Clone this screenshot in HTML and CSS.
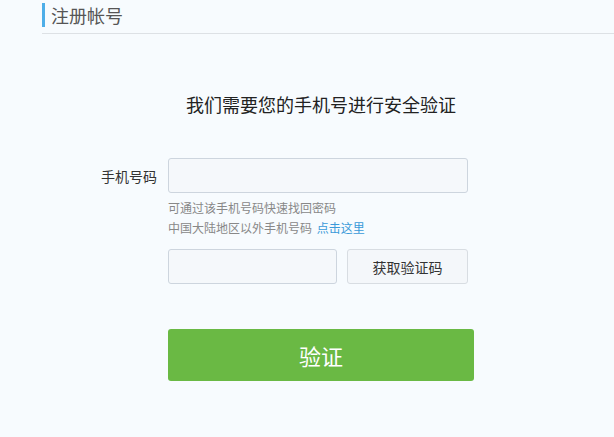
FILE: index.html
```html
<!DOCTYPE html>
<html lang="zh-CN">
<head>
    <meta charset="UTF-8">
    <meta name="viewport" content="width=device-width, initial-scale=1.0">
    <title>注册帐号</title>
    <link rel="stylesheet" href="styles.css">
</head>
<body>
    <div class="header">
        <h3 class="header-title">注册帐号</h3>
    </div>
    <div class="main">
        <h2 class="tip">我们需要您的手机号进行安全验证</h2>
        <div class="row">
            <label class="label" for="phone">手机号码</label>
            <input class="input" type="text" id="phone">
        </div>
        <div class="hint">
            <p>可通过该手机号码快速找回密码</p>
            <p>中国大陆地区以外手机号码 <a href="#">点击这里</a></p>
        </div>
        <div class="row code-row">
            <span class="label"></span>
            <input class="input code" type="text" id="code">
            <button class="get-code">获取验证码</button>
        </div>
        <div class="row submit-row">
            <span class="label"></span>
            <button class="submit">验证</button>
        </div>
    </div>
</body>
</html>
```

FILE: styles.css
```css
body {
    margin: 0;
    background: #f7fbfe;
    font-family: "Noto Sans CJK SC", "Noto Sans", sans-serif;
    color: #333;
}
.header {
    padding: 3px 0 0 42px;
}
.header-title {
    margin: 0;
    padding-left: 6px;
    border-left: 3px solid #4eaee8;
    height: 24px;
    line-height: 24px;
    font-size: 18px;
    font-weight: normal;
    color: #555;
}
.header::after {
    content: "";
    display: block;
    margin-top: 6px;
    border-bottom: 1px solid #dde1e5;
}
.main {
    padding-top: 57px;
}
.tip {
    margin: 0 0 41px 168px;
    width: 306px;
    text-align: center;
    font-size: 18px;
    font-weight: normal;
    color: #222;
    line-height: 26px;
}
.row {
    display: flex;
    align-items: center;
}
.label {
    width: 157px;
    margin-right: 11px;
    text-align: right;
    font-size: 14px;
    color: #333;
}
.input {
    box-sizing: border-box;
    width: 300px;
    height: 35px;
    border: 1px solid #cdd5de;
    border-radius: 3px;
    background: #f5f8fb;
    padding: 0 8px;
    font-size: 14px;
    outline: none;
}
.hint {
    margin: 5px 0 11px 168px;
    font-size: 12px;
    color: #888;
    line-height: 20px;
}
.hint p {
    margin: 0;
}
.hint a {
    color: #3a9ad9;
    text-decoration: none;
    margin-left: 2px;
}
.input.code {
    width: 169px;
}
.get-code {
    box-sizing: border-box;
    width: 121px;
    height: 35px;
    margin-left: 10px;
    border: 1px solid #d8dde2;
    border-radius: 3px;
    background: #f4f7fa;
    font-family: inherit;
    font-size: 14px;
    color: #333;
    cursor: pointer;
}
.submit-row {
    margin-top: 45px;
}
.submit {
    width: 306px;
    height: 52px;
    border: none;
    border-radius: 3px;
    background: #6ab944;
    color: #fff;
    font-family: inherit;
    font-size: 22px;
    cursor: pointer;
}
```
